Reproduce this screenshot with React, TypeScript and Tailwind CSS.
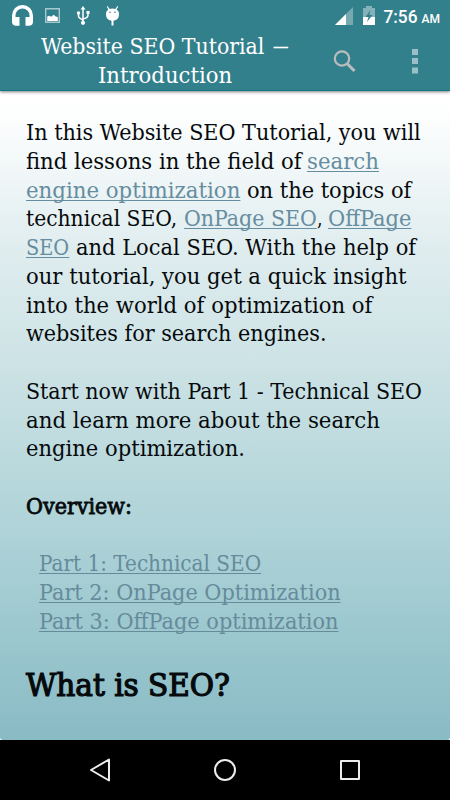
import { useLayoutEffect, useRef, useState } from "react";
import type { ReactNode } from "react";

// Sets a run of text to a given advance width.
function Fit({ w, children, className = "" }: { w: number; children: ReactNode; className?: string }) {
  const ref = useRef<HTMLSpanElement>(null);
  const [scale, setScale] = useState(1);
  useLayoutEffect(() => {
    if (ref.current) setScale(w / ref.current.offsetWidth);
  }, [w]);
  return (
    <span className="block shrink-0" style={{ width: w }}>
      <span ref={ref} className={`inline-block origin-left whitespace-nowrap ${className}`} style={{ transform: `scaleX(${scale})` }}>
        {children}
      </span>
    </span>
  );
}

const LINK = "text-[#668da0] underline decoration-1 underline-offset-[2px] [text-decoration-skip-ink:none]";
const PART = "text-[#668b9b] underline decoration-1 underline-offset-[2px] [text-decoration-skip-ink:none]";

function Line({ children, className = "" }: { children?: ReactNode; className?: string }) {
  return <div className={`flex h-[28.75px] leading-[28.75px] ${className}`}>{children}</div>;
}

function StatusBar() {
  return (
    <div className="flex h-8 items-start text-white">
      <svg width="450" height="32" viewBox="0 0 450 32" fill="currentColor">
        <path d="M12 15.500a10.500 10.500 0 0 1 21 0V21.500q0 4-3.500 4.200H25.500V17h4v-1.500a7 7 0 0 0-14 0V17h4v8.700h-4q-3.500-.2-3.500-4.200z" />
        <path d="M45.700 8.700h13.600v13.600h-13.600z" fill="none" stroke="#a5c8cd" strokeWidth="1.400" />
        <path d="M47.200 21v-4.500l2-.7 2 1 2.500-2 2 1.700 2.100.5v4z" />
        <g stroke="currentColor" strokeWidth="1.500" fill="none">
          <path d="M83 8v15M78.500 13v3q0 2 4.500 4M88 12v3q0 3-5 4" />
        </g>
        <path d="m83 6 2.500 3.500h-5zM86.500 11h3v3h-3z" />
        <circle cx="78.500" cy="13" r="1.700" />
        <circle cx="83" cy="22.800" r="2.100" />
        <path d="m107.500 6 2.200 3q2.800-1 5.600 0l2.200-3 .7.6-1.500 3q2.300 1.700 2.300 4.900 0 5.500-5.500 6.300v4.700h-2v-4.700q-5.500-.8-5.500-6.300 0-3.200 2.300-4.900l-1.500-3z" />
        <circle cx="110" cy="12.300" r=".8" fill="#33808d" />
        <circle cx="115" cy="12.300" r=".8" fill="#33808d" />
        <path d="M353 7v18h-18z" fill="#77a9b1" />
        <path d="M346 14v11h-11z" />
        <path d="M363 8h3V6h6v2h3v17h-12z" fill="#85b2b9" />
        <path d="M363 17h12v8h-12z" />
        <path d="m370.500 10-5 7h3l-1.500 5 5.500-7h-3.200z" fill="#33808d" />
        <text x="383.500" y="22.500" fontFamily="Roboto, sans-serif" fontWeight="500" fontSize="18.200" textLength="34" lengthAdjust="spacingAndGlyphs">7:56</text>
        <text x="421.500" y="22.500" fontFamily="Roboto, sans-serif" fontWeight="500" fontSize="12.800" textLength="18.500" lengthAdjust="spacingAndGlyphs">AM</text>
      </svg>
    </div>
  );
}

export default function App() {
  return (
    <div className="flex h-[800px] w-[450px] flex-col overflow-hidden bg-black font-['DejaVu_Serif_Condensed','DejaVu_Serif',serif] text-[23px] text-[#060a0c]">
      <header className="z-10 h-[91px] shrink-0 border-b border-[#107782] bg-[#33808d] text-white shadow-[0_1px_3px_rgba(0,0,0,0.5)]">
        <StatusBar />
        <div className="flex h-[58px]">
          <div className="w-[330px] leading-[29px]">
            <div className="flex gap-2 pl-[41px]"><Fit w={223}>Website SEO Tutorial</Fit><Fit w={17}>–</Fit></div>
            <div className="pl-[98px]"><Fit w={134}>Introduction</Fit></div>
          </div>
          <svg width="120" height="58" viewBox="330 32 120 58">
            <g fill="none" stroke="#b9bdbe">
              <circle cx="342" cy="58.500" r="7.200" strokeWidth="2.200" />
              <path d="m347.500 64 7 7" strokeWidth="3" />
            </g>
            <path d="M412 49h6v6h-6zM412 58h6v6h-6zM412 67.500h6v6h-6z" fill="#99c0c6" />
          </svg>
        </div>
      </header>

      <div className="h-[649px] shrink-0 bg-white">
        <main className="h-full rounded-b-[3px] bg-[linear-gradient(to_bottom,#ffffff_0%,#fdfefe_4%,#e0edef_24%,#c6dfe2_48%,#b0d4d9_66%,#89bbc5_100%)] pl-[26px] pt-[27px]">
          <Line><Fit w={395}>In this Website SEO Tutorial, you will</Fit></Line>
          <Line className="gap-[5px]"><Fit w={276}>find lessons in the field of</Fit><Fit w={72} className={LINK}>search</Fit></Line>
          <Line className="gap-[7px]"><Fit w={214} className={LINK}>engine optimization</Fit><Fit w={164}>on the topics of</Fit></Line>
          <Line><Fit w={158}>technical SEO,&nbsp;</Fit><Fit w={133} className={LINK}>OnPage SEO</Fit><Fit w={11}>,&nbsp;</Fit><Fit w={83} className={LINK}>OffPage</Fit></Line>
          <Line className="gap-[7px]"><Fit w={43} className={LINK}>SEO</Fit><Fit w={340}>and Local SEO. With the help of</Fit></Line>
          <Line><Fit w={381}>our tutorial, you get a quick insight</Fit></Line>
          <Line><Fit w={346}>into the world of optimization of</Fit></Line>
          <Line><Fit w={300}>websites for search engines.</Fit></Line>
          <Line />
          <Line><Fit w={396}>Start now with Part 1 - Technical SEO</Fit></Line>
          <Line><Fit w={354}>and learn more about the search</Fit></Line>
          <Line><Fit w={219}>engine optimization.</Fit></Line>
          <Line />
          <Line><Fit w={106} className="[-webkit-text-stroke:0.8px_#060a0c]">Overview:</Fit></Line>
          <Line />
          <Line className="pl-[13px]"><Fit w={222} className={PART}>Part 1: Technical SEO</Fit></Line>
          <Line className="pl-[13px]"><Fit w={302} className={PART}>Part 2: OnPage Optimization</Fit></Line>
          <Line className="pl-[13px]"><Fit w={299} className={PART}>Part 3: OffPage optimization</Fit></Line>
          <h1 className="mt-[29px] text-[32px] leading-10"><Fit w={204} className="[-webkit-text-stroke:1.2px_#060a0c]">What is SEO?</Fit></h1>
        </main>
      </div>

      <nav className="h-[60px] shrink-0 bg-black">
        <svg width="450" height="60" viewBox="0 0 450 60" fill="none" stroke="#ececec" strokeWidth="2" strokeLinejoin="round">
          <path d="M91 30l18-10.500v21z" />
          <circle cx="225" cy="30" r="10" />
          <path d="M341 21h18v18h-18z" />
        </svg>
      </nav>
    </div>
  );
}
